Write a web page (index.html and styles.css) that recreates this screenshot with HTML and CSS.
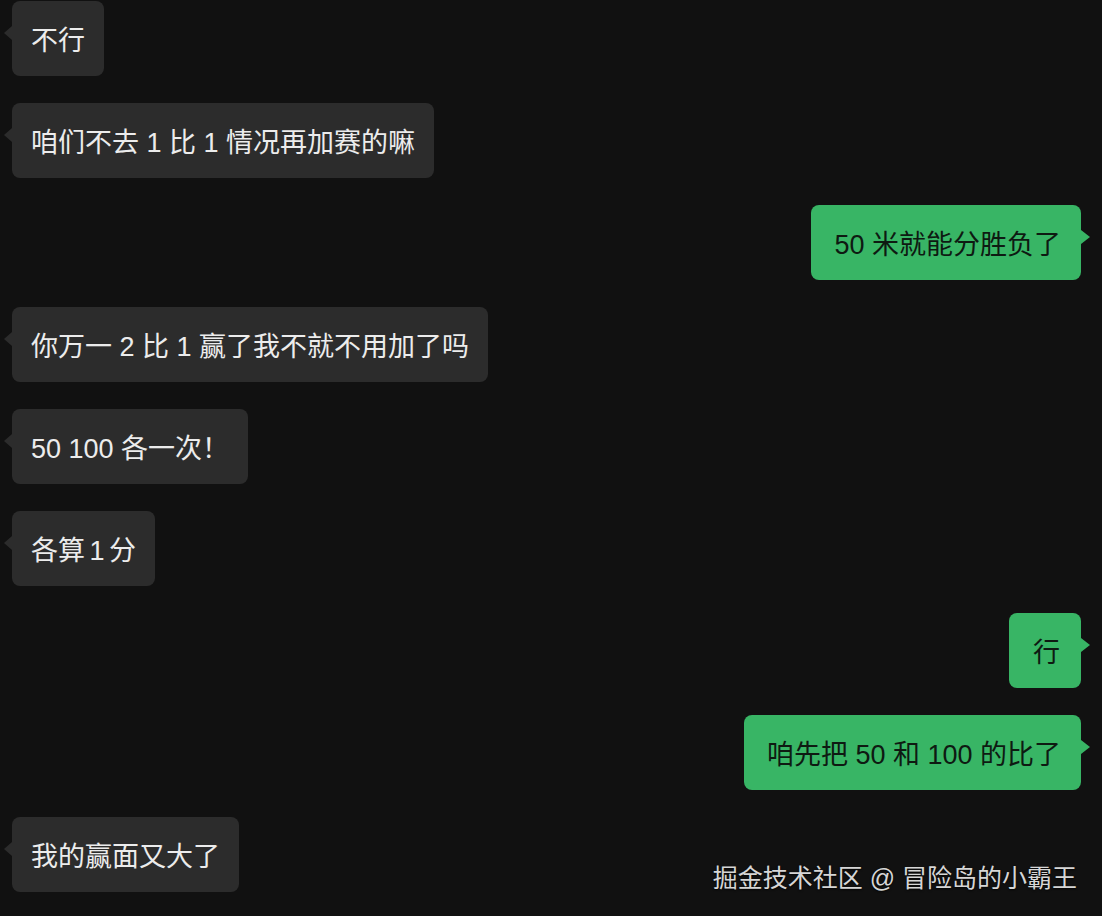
FILE: index.html
```html
<!DOCTYPE html>
<html>
 <head>
  <meta charset="utf-8">
  <title>Chat</title>
  <link rel="stylesheet" href="styles.css">
 </head>
<body>

<div class="chat">
  <div class="row left"><div class="bubble">不行</div></div>
  <div class="row left"><div class="bubble">咱们不去 1 比 1 情况再加赛的嘛</div></div>
  <div class="row right"><div class="bubble">50 米就能分胜负了</div></div>
  <div class="row left"><div class="bubble">你万一 2 比 1 赢了我不就不用加了吗</div></div>
  <div class="row left"><div class="bubble">50 100 各一次！</div></div>
  <div class="row left"><div class="bubble tight">各算 1 分</div></div>
  <div class="row right"><div class="bubble">行</div></div>
  <div class="row right"><div class="bubble">咱先把 50 和 100 的比了</div></div>
  <div class="row left"><div class="bubble">我的赢面又大了</div></div>
</div>

<div class="watermark">掘金技术社区 @ 冒险岛的小霸王</div>

</body>
</html>
```

FILE: styles.css
```css
* {
  box-sizing: border-box;
}

html, body {
  height: 100%;
}

body {
  margin: 0;
  background-color: #111111;
  font-family: "Liberation Sans", "Noto Sans CJK SC", sans-serif;
  overflow: hidden;
  position: relative;
}

/* message list */
.chat {
  display: flex;
  flex-direction: column;
  gap: 27px;
  padding: 1px 21px 0 12px;
}

.row {
  display: flex;
}

.row.left {
  justify-content: flex-start;
}

.row.right {
  justify-content: flex-end;
}

.bubble {
  position: relative;
  height: 75px;
  min-width: 72px;
  display: flex;
  align-items: center;
  justify-content: center;
  padding: 0 19px;
  border-radius: 8px;
  font-size: 27px;
  white-space: pre;
}

.bubble.tight {
  word-spacing: -3px;
}

.left .bubble {
  background-color: #2c2c2c;
  color: #ececec;
}

.right .bubble {
  background-color: #38b565;
  color: #0e1a12;
  padding: 0 20px 0 23px;
}

/* little tails */
.bubble::before {
  content: "";
  position: absolute;
  top: 25px;
  border-top: 7px solid transparent;
  border-bottom: 7px solid transparent;
}

.left .bubble::before {
  left: -8px;
  border-right: 8px solid #2c2c2c;
}

.right .bubble::before {
  right: -9px;
  border-left: 9px solid #38b565;
}

.watermark {
  position: absolute;
  right: 25px;
  bottom: 22px;
  font-size: 25px;
  color: #d6d6d6;
  text-shadow: 0 1px 2px rgba(0, 0, 0, 0.8);
}
```
